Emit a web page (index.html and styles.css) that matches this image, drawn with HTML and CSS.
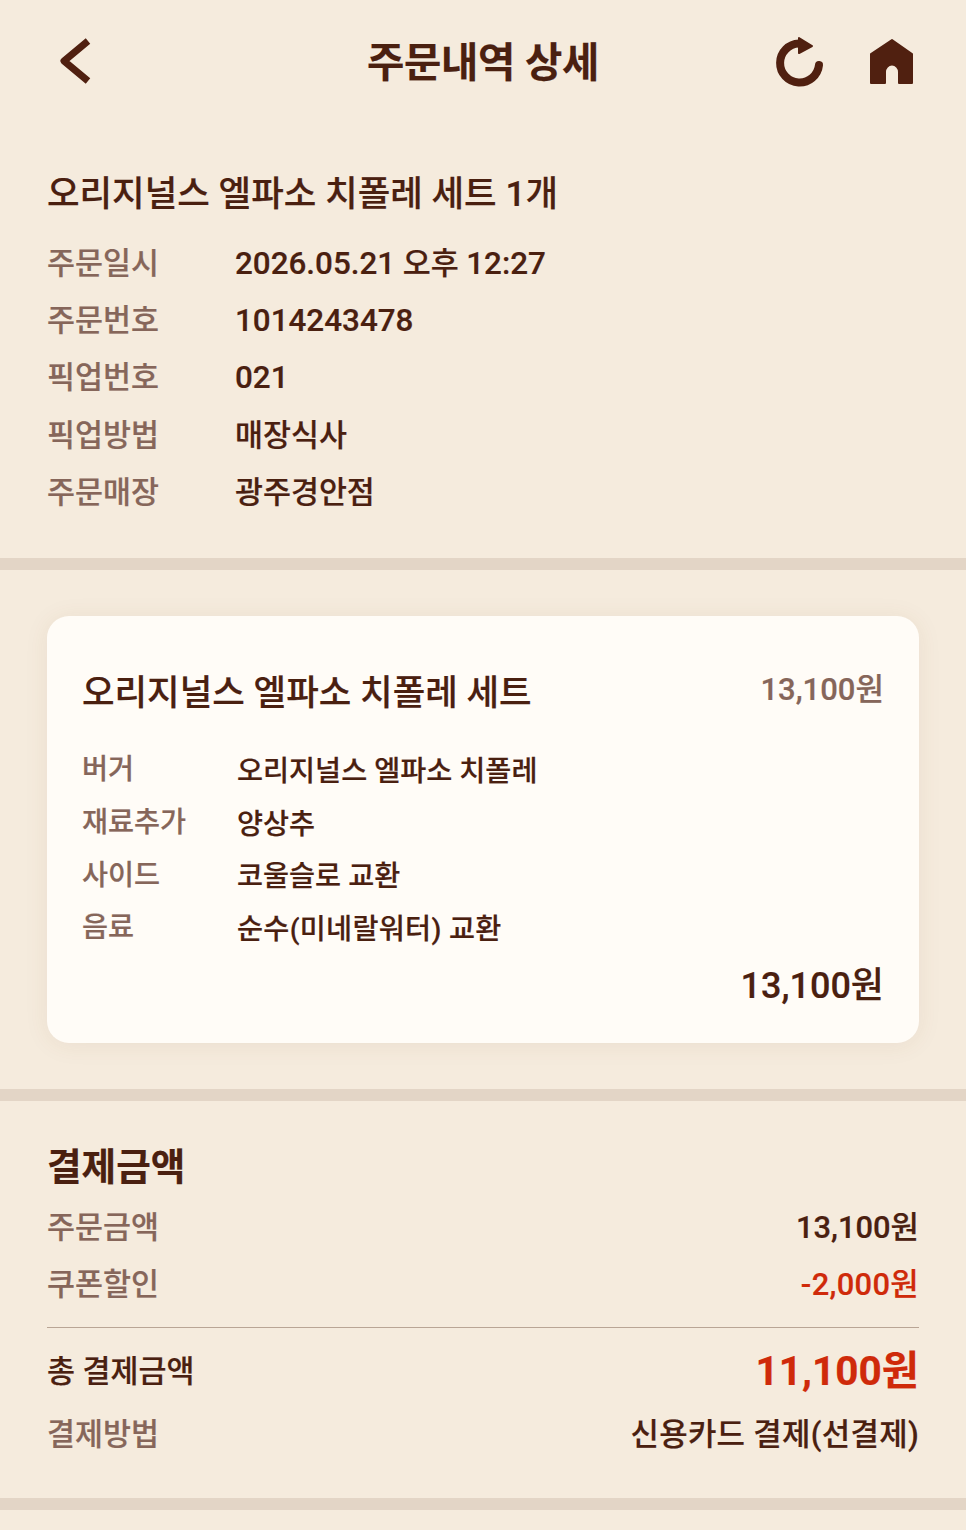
FILE: index.html
```html
<!DOCTYPE html>
<html lang="ko">
<head>
<meta charset="utf-8">
<title>주문내역 상세</title>
<link rel="stylesheet" href="styles.css">
</head>
<body>
<header class="topbar">
  <button class="icon-btn" aria-label="뒤로">
    <svg width="36" height="48" viewBox="0 0 36 48"><path class="stroke" d="M30 4 L6 24 L30 44"/></svg>
  </button>
  <h1 class="title">주문내역 상세</h1>
  <div class="actions">
    <svg class="refresh" width="56" height="56" viewBox="0 0 56 56"><path class="stroke arc" d="M48 31 A19.500 19.500 0 1 1 28 9.500"/><path class="fill rounded" d="M28 4 L41 12 L28 19 Z"/></svg>
    <svg width="48" height="50" viewBox="0 0 48 50"><path class="fill rounded" d="M24 4 L44 18 L44 47 L31 47 L31 36 A7 7.500 0 0 0 17 36 L17 47 L3 47 L3 18 Z"/></svg>
  </div>
</header>

<section class="info">
  <h2 class="order-name">오리지널스 엘파소 치폴레 세트 1개</h2>
  <dl class="kv">
    <dt>주문일시</dt><dd><span class="num">2026.05.21</span> 오후 <span class="num">12:27</span></dd>
    <dt>주문번호</dt><dd><span class="num">1014243478</span></dd>
    <dt>픽업번호</dt><dd><span class="num">021</span></dd>
    <dt>픽업방법</dt><dd>매장식사</dd>
    <dt>주문매장</dt><dd>광주경안점</dd>
  </dl>
</section>

<section class="items">
  <article class="card">
    <div class="card-head">
      <h3 class="item-name">오리지널스 엘파소 치폴레 세트</h3>
      <span class="item-price">13,100원</span>
    </div>
    <dl class="opts">
      <dt>버거</dt><dd>오리지널스 엘파소 치폴레</dd>
      <dt>재료추가</dt><dd>양상추</dd>
      <dt>사이드</dt><dd>코울슬로 교환</dd>
      <dt>음료</dt><dd class="spaced">순수(미네랄워터) 교환</dd>
    </dl>
    <div class="card-total">13,100원</div>
  </article>
</section>

<section class="pay">
  <h2 class="pay-title">결제금액</h2>
  <div class="row"><span class="label">주문금액</span><span class="val">13,100원</span></div>
  <div class="row"><span class="label">쿠폰할인</span><span class="val red">-2,000원</span></div>
  <div class="row total"><span class="total-label">총 결제금액</span><span class="total-val">11,100원</span></div>
  <div class="row"><span class="label">결제방법</span><span class="val spaced">신용카드 결제(선결제)</span></div>
</section>
</body>
</html>
```
FILE: styles.css
```css
* { box-sizing: border-box; }
html, body { margin: 0; padding: 0; }
body {
  width: 966px;
  height: 1530px;
  overflow: hidden;
  background: #f5ebdd;
  color: #4a2010;
  font-family: Roboto, "Noto Sans CJK KR", "Noto Sans", sans-serif;
  font-weight: 500;
  -webkit-text-stroke: .2px currentColor;
}
h1, h2, h3, dl, dd, dt { margin: 0; padding: 0; font: inherit; }
.stroke { fill: none; stroke: #502010; stroke-width: 7; stroke-linejoin: round; }
.arc { stroke-width: 8; stroke-linecap: round; }
.fill { fill: #502010; }
.rounded { stroke: #502010; stroke-width: 2; stroke-linejoin: round; }

.topbar {
  height: 122px;
  display: grid;
  grid-template-columns: 1fr auto 1fr;
  align-items: center;
  padding: 0 50px;
}
.icon-btn { background: none; border: 0; padding: 0; display: flex; justify-self: start; margin-left: 8px; }
.title { font-size: 40.600px; font-weight: 700; line-height: 1; letter-spacing: -0.3px; margin-top: 4px; }
.actions { justify-self: end; display: flex; gap: 41px; align-items: center; }
.refresh { margin-top: 2px; }

.info { height: 448px; padding: 47px 47px 0; border-bottom: 12px solid #e3d5c6; }
.order-name { font-size: 35.400px; line-height: 50px; }
.kv { display: grid; grid-template-columns: 188px 1fr; grid-auto-rows: 57.300px; margin-top: 16px; font-size: 30.400px; line-height: 44px; align-items: center; }
.kv dt { color: #86665a; }
.num { font-size: 31.400px; line-height: 1; }

.items { height: 531px; padding: 46px 47px 0; border-bottom: 12px solid #e3d5c6; }
.card {
  height: 427px;
  background: #fffcf7;
  border-radius: 22px;
  box-shadow: 0 2px 24px rgba(120, 80, 40, .08);
  padding: 46px 35px 0;
}
.card-head { display: flex; justify-content: space-between; align-items: center; height: 54px; }
.item-name { font-size: 35.400px; }
.item-price { font-size: 31px; color: #86665a; margin-bottom: 6px; }
.opts { display: grid; grid-template-columns: 155px 1fr; grid-auto-rows: 52.700px; margin-top: 28px; font-size: 28.300px; line-height: 42px; align-items: center; }
.opts dt { color: #86665a; }
.opts dd { padding-top: 3px; }
.spaced { letter-spacing: .3px; }
.card-total { text-align: right; font-size: 36px; margin-top: 3px; line-height: 56px; }

.pay { height: 409px; padding: 40px 47px 0; border-bottom: 12px solid #e3d5c6; }
.pay-title { font-size: 37.600px; font-weight: 700; line-height: 52px; margin-bottom: 3px; }
.row { display: flex; justify-content: space-between; align-items: center; height: 57px; font-size: 30.400px; }
.label { color: #86665a; }
.val { font-size: 30.900px; }
.red { color: #cf2a0a; letter-spacing: .3px; }
.total { border-top: 1px solid #b9a595; height: 82px; margin-top: 17px; margin-bottom: -6px; }
.total-val { font-size: 40.500px; font-weight: 700; color: #cf2a0a; margin-bottom: 2px; }
```
